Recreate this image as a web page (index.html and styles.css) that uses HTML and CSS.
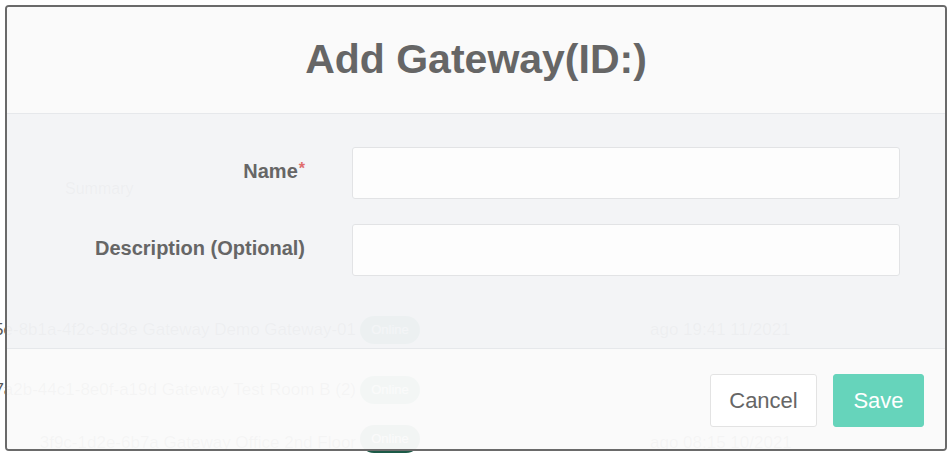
FILE: index.html
```html
<!DOCTYPE html>
<html>
<head>
<meta charset="utf-8">
<link rel="stylesheet" href="styles.css">
</head>
<body>
<div class="page">
  <div class="summary">Summary</div>
  <div class="thead"><span></span><span></span><span class="th">Last Sync Gateway ↑</span></div>
  <div class="row"><span class="cell"><span>dc5e-8b1a-4f2c-9d3e Gateway Demo Gateway-01</span></span><span class="pill">Online</span><span class="right">ago 19:41 11/2021</span></div>
  <div class="row"><span class="cell"><span>7a2b-44c1-8e0f-a19d Gateway Test Room B (2)</span></span><span class="pill">Online</span><span class="right"></span></div>
  <div class="row last"><span class="cell"><span>3f9c-1d2e-6b7a Gateway Office 2nd Floor</span></span><span class="pill dark">Online</span><span class="right">ago 08:15 10/2021</span></div>
</div>

<div class="modal">
  <div class="modal-header">
    <h1 class="title">Add Gateway(ID:)</h1>
  </div>
  <div class="modal-body">
    <form class="form">
      <label class="label" for="name">Name<span class="req">*</span></label>
      <input class="input" id="name" type="text">
      <label class="label" for="desc">Description (Optional)</label>
      <input class="input" id="desc" type="text">
    </form>
  </div>
  <div class="modal-footer">
    <button class="btn btn-cancel" type="button">Cancel</button>
    <button class="btn btn-save" type="button">Save</button>
  </div>
</div>
</body>
</html>
```

FILE: styles.css
```css
html, body {
  margin: 0;
  padding: 0;
  background: #ffffff;
  font-family: "Liberation Sans", Arial, sans-serif;
  overflow: hidden;
}

body {
  width: 950px;
  height: 453px;
  position: relative;
}

/* faint page behind the modal */
.page {
  height: 453px;
  overflow: hidden;
  box-sizing: border-box;
  padding-top: 180px;
  color: #555;
  font-size: 17px;
}

.summary {
  padding-left: 65px;
  height: 62px;
  font-size: 16px;
}

.thead {
  display: grid;
  grid-template-columns: 360px 60px 1fr;
  height: 58px;
  font-size: 18px;
}

.thead .th {
  padding-left: 220px;
}

.row {
  display: grid;
  grid-template-columns: 360px 60px 1fr;
  align-items: center;
  height: 60px;
  white-space: nowrap;
}

.row.last {
  height: 33px;
  align-items: end;
}

.cell {
  display: flex;
  justify-content: flex-end;
  overflow: hidden;
  padding-right: 4px;
}

.pill {
  height: 28px;
  border-radius: 14px;
  background: #2e8c6e;
  color: #fff;
  font-size: 13px;
  line-height: 28px;
  text-align: center;
}

.pill.dark {
  background: #1c5a47;
}

.right {
  padding-left: 230px;
}

/* modal overlay */
.modal {
  position: absolute;
  left: 5px;
  top: 5px;
  width: 942px;
  height: 446px;
  box-sizing: border-box;
  border: 2px solid #6a6a6a;
  border-radius: 4px;
  overflow: hidden;
  display: flex;
  flex-direction: column;
}

.modal-header {
  height: 107px;
  box-sizing: border-box;
  border-bottom: 1px solid #e6e8eb;
  background: rgba(250, 250, 250, 0.98);
  display: flex;
  align-items: center;
  justify-content: center;
}

.title {
  margin: 0;
  font-size: 41px;
  font-weight: bold;
  color: #666666;
  position: relative;
  top: -1px;
}

.modal-body {
  flex: 1;
  background: rgba(243, 244, 246, 0.97);
  padding-top: 33px;
  box-sizing: border-box;
}

.form {
  display: grid;
  grid-template-columns: 298px 548px;
  column-gap: 47px;
  row-gap: 25px;
  margin: 0;
}

.label {
  align-self: center;
  justify-self: end;
  font-size: 20px;
  font-weight: bold;
  color: #666666;
  position: relative;
  top: -2px;
}

.req {
  color: #e06c6c;
  font-size: 16px;
  vertical-align: top;
  margin-left: 1px;
}

.input {
  height: 52px;
  box-sizing: border-box;
  border: 1px solid #e2e3e5;
  border-radius: 3px;
  background: #fdfdfd;
  margin: 0;
  padding: 0 12px;
  font-size: 18px;
  font-family: "Liberation Sans", Arial, sans-serif;
}

.modal-footer {
  height: 101px;
  box-sizing: border-box;
  border-top: 1px solid #e6e8eb;
  background: rgba(250, 250, 250, 0.97);
  display: flex;
  justify-content: flex-end;
  align-items: flex-start;
  gap: 16px;
  padding: 25px 21px 0 0;
}

.btn {
  height: 53px;
  border-radius: 3px;
  font-family: "Liberation Sans", Arial, sans-serif;
  font-size: 22px;
  padding: 0;
  cursor: pointer;
}

.btn-cancel {
  width: 107px;
  background: #ffffff;
  border: 1px solid #e3e3e3;
  color: #666666;
}

.btn-save {
  width: 91px;
  background: #66d4bb;
  border: 1px solid #66d4bb;
  color: #ffffff;
}
```
